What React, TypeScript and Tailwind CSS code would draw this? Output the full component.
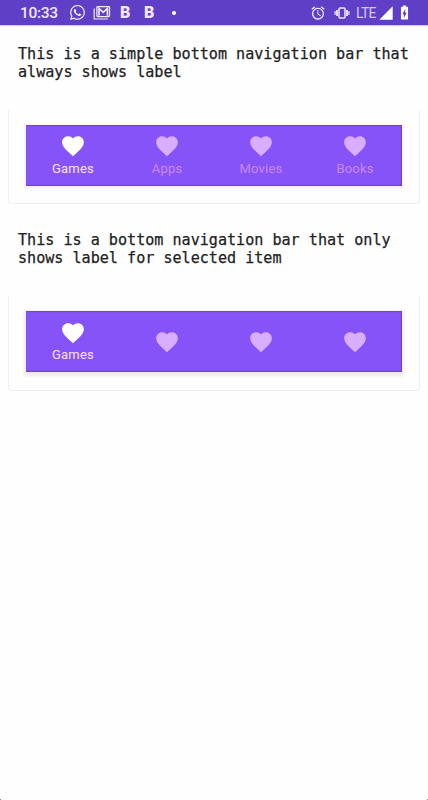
import React from "react";
import { MdFavorite, MdAlarm, MdSignalCellular4Bar, MdBatteryChargingFull } from "react-icons/md";
import { FaWhatsapp } from "react-icons/fa";

const labels = ["Games", "Apps", "Movies", "Books"];

function MailStack() {
  return (
    <svg width="18" height="16" viewBox="0 0 18 16" fill="none" stroke="currentColor">
      <path d="M1.2 3.5v10.5h13.6" strokeWidth="1.2" />
      <rect x="3.9" y="1.6" width="12.6" height="10" rx="0.8" strokeWidth="1.3" />
      <path d="M6 10.8V3.4l4.2 4 4.2-4v7.4" strokeWidth="1.6" />
    </svg>
  );
}

function VibrateIcon() {
  return (
    <svg width="16" height="14" viewBox="0 0 16 14" fill="none" stroke="currentColor">
      <rect x="5" y="2" width="6" height="10" rx="1" strokeWidth="1.5" />
      <path d="M3 4v6M13 4v6" strokeWidth="1.8" />
      <path d="M1.1 5.3v3.4M14.9 5.3v3.4" strokeWidth="1.3" />
    </svg>
  );
}

function StatusBar() {
  return (
    <header className="flex h-[25px] w-full items-center bg-[#5e3fc6] pl-5 pr-[16px] text-[#f3e6ff] shadow-[0_1px_1px_#d9cdf0]">
      <span className="w-[49px] font-['Roboto',sans-serif] text-[15.5px] font-medium leading-6 tracking-[-0.3px]">10:33</span>
      <FaWhatsapp size={17} />
      <span className="ml-[7px]"><MailStack /></span>
      <span className="ml-[9px] w-6 font-['Roboto',sans-serif] text-[16px] font-black leading-6">B</span>
      <span className="w-[28px] font-['Roboto',sans-serif] text-[16px] font-black leading-6">B</span>
      <span className="size-1 rounded-full bg-white" />
      <span className="flex-1" />
      <MdAlarm size={16} />
      <span className="ml-[8px]"><VibrateIcon /></span>
      <span className="ml-[6px] w-[20px] font-['Roboto',sans-serif] text-[14px] leading-6 tracking-[-0.7px] text-[#d9c8f7]">LTE</span>
      <MdSignalCellular4Bar size={16} className="ml-[2px] text-white" />
      <MdBatteryChargingFull size={17} className="ml-[2px] -mr-[1px] text-white" />
    </header>
  );
}

function NavBar({ selectedOnly }: { selectedOnly: boolean }) {
  return (
    <nav
      className={`grid h-[61px] grid-cols-4 bg-[#8653f8] ${
        selectedOnly
          ? "shadow-[inset_-1px_1px_1px_#7045bd,inset_0_-1px_1px_#7045bd,0_2px_3px_2px_#eeeaf4]"
          : "shadow-[inset_-1px_1px_1px_#7045bd,inset_0_-1px_1px_#7045bd,0_1px_3px_1px_#f1e9fa]"
      }`}
    >
      {labels.map((label, i) => (
        <div
          key={label}
          className={`flex flex-col items-center ${
            i === 0 ? "text-white" : "text-[#d9adff]"
          } ${selectedOnly && i > 0 ? "justify-center" : selectedOnly ? "pt-[9px]" : "pt-[8px]"}`}
        >
          <MdFavorite size={26} className="shrink-0" />
          {(!selectedOnly || i === 0) && (
            <span
              className={`font-['Roboto',sans-serif] text-[13px] tracking-[0.2px] ${
                selectedOnly ? "leading-[18px]" : "leading-[20px]"
              } ${i === 0 ? "text-[#ffe0ff]" : "text-[#cc87f5]"}`}
            >
              {label}
            </span>
          )}
        </div>
      ))}
    </nav>
  );
}

function Example({ lines, selectedOnly = false }: { lines: string[]; selectedOnly?: boolean }) {
  return (
    <section>
      <h2 className="ml-[18px] whitespace-nowrap font-['DejaVu_Sans_Mono',monospace] text-[15.1px] leading-[18px] text-[#222] [-webkit-text-stroke:0.25px_#222]">
        {lines.map((line) => (
          <span key={line} className="block">{line}</span>
        ))}
      </h2>
      <div
        className={`mx-2 mt-[29px] rounded-b-[4px] border-x border-b border-[#eeeeee] px-[17px] pt-[15px] ${
          selectedOnly ? "pb-[18px]" : "pb-[17px]"
        }`}
      >
        <NavBar selectedOnly={selectedOnly} />
      </div>
    </section>
  );
}

export default function App() {
  return (
    <main className="flex h-[800px] w-[428px] flex-col overflow-hidden bg-[#fefefe]">
      <StatusBar />
      <div className="flex flex-col gap-[27px] pt-5">
        <Example lines={["This is a simple bottom navigation bar that", "always shows label"]} />
        <Example lines={["This is a bottom navigation bar that only", "shows label for selected item"]} selectedOnly />
      </div>
      <div className="mt-auto flex justify-between">
        <span className="size-px bg-[#888]" />
        <span className="size-px bg-[#888]" />
      </div>
    </main>
  );
}
